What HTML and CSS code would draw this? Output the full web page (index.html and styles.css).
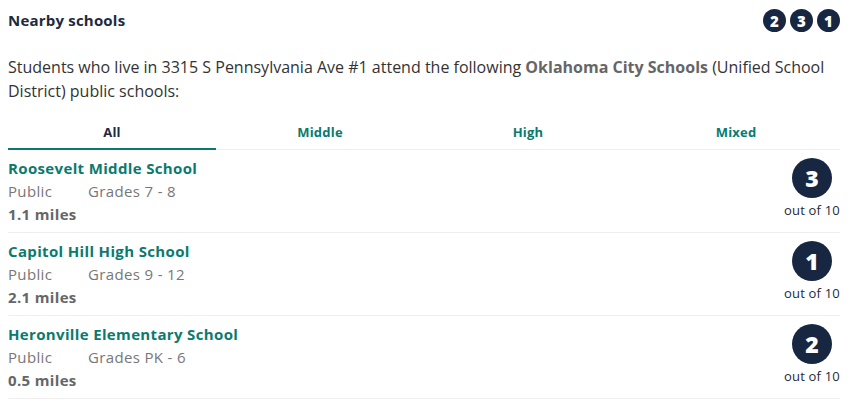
FILE: index.html
```html
<!DOCTYPE html>
<html>
<head>
<meta charset="utf-8">
<link rel="stylesheet" href="styles.css">
</head>
<body>
<div class="wrap">
  <div class="head">
    <h2 class="title">Nearby schools</h2>
    <div class="mini">
      <span class="dot">2</span><span class="dot">3</span><span class="dot">1</span>
    </div>
  </div>
  <p class="intro">Students who live in 3315 S Pennsylvania Ave #1 attend the following <b>Oklahoma City Schools</b> (Unified School District) public schools:</p>
  <div class="tabs">
    <div class="tab active">All</div>
    <div class="tab">Middle</div>
    <div class="tab">High</div>
    <div class="tab">Mixed</div>
  </div>
  <div class="row">
    <div class="info">
      <div class="name">Roosevelt Middle School</div>
      <div class="meta"><span class="type">Public</span><span>Grades 7 - 8</span></div>
      <div class="dist">1.1 miles</div>
    </div>
    <div class="rating"><span class="big">3</span><span class="out">out of 10</span></div>
  </div>
  <div class="row">
    <div class="info">
      <div class="name">Capitol Hill High School</div>
      <div class="meta"><span class="type">Public</span><span>Grades 9 - 12</span></div>
      <div class="dist">2.1 miles</div>
    </div>
    <div class="rating"><span class="big">1</span><span class="out">out of 10</span></div>
  </div>
  <div class="row">
    <div class="info">
      <div class="name">Heronville Elementary School</div>
      <div class="meta"><span class="type">Public</span><span>Grades PK - 6</span></div>
      <div class="dist">0.5 miles</div>
    </div>
    <div class="rating"><span class="big">2</span><span class="out">out of 10</span></div>
  </div>
</div>
</body>
</html>
```
FILE: styles.css
```css
html, body { margin: 0; padding: 0; background: #fff; }
body { font-family: "Open Sans", Lato, sans-serif; color: #333; }
.wrap { padding: 8px 12px 0 8px; }
.head { display: flex; justify-content: space-between; align-items: flex-start; height: 40px; }
.title { margin: 0; font-size: 15px; font-weight: 700; color: #1d2a3f; line-height: 25px; letter-spacing: 0.2px; }
.mini { display: flex; gap: 4px; padding-top: 1px; }
.dot { width: 23px; height: 23px; border-radius: 50%; background: #172742; color: #fff; font-weight: 800; font-size: 15px; display: flex; align-items: center; justify-content: center; }
.intro { margin: 7px 0 0; font-size: 16px; line-height: 24px; color: #333; }
.intro b { color: #666; font-weight: 700; }
.tabs { display: grid; grid-template-columns: repeat(4, 1fr); margin-top: 11px; border-bottom: 1px solid #eeeeee; }
.tab { text-align: center; font-size: 13px; font-weight: 700; color: #0b7a6e; height: 34px; line-height: 36px; border-bottom: 2px solid transparent; margin-bottom: -1px; letter-spacing: 0.2px; }
.tab.active { color: #1d2a3f; border-bottom-color: #0b7a6e; }
.row { display: flex; justify-content: space-between; padding: 7px 0 6px; border-bottom: 1px solid #eeeeee; }
.info { line-height: 23px; font-size: 15px; letter-spacing: 0.35px; }
.name { color: #0b7a6e; font-weight: 700; }
.meta { color: #777; }
.type { display: inline-block; width: 80px; }
.dist { color: #666; font-weight: 700; }
.rating { display: flex; flex-direction: column; align-items: flex-end; padding-top: 1px; }
.big { width: 40px; height: 40px; border-radius: 50%; background: #172742; color: #fff; font-size: 23px; font-weight: 800; display: flex; align-items: center; justify-content: center; margin-right: 8px; }
.out { font-size: 13px; line-height: 24px; color: #1d2a3f; letter-spacing: 0.2px; }
```
